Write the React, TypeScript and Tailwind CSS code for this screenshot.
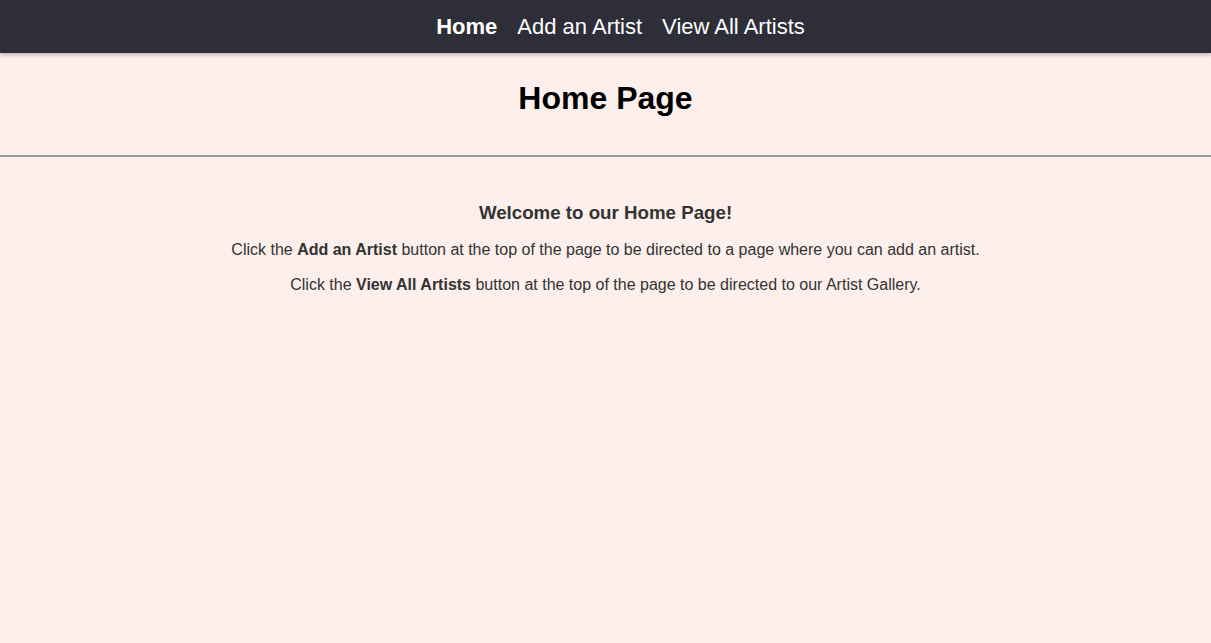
import React from 'react';

const navLinks = [
  { label: 'Home', active: true },
  { label: 'Add an Artist', active: false },
  { label: 'View All Artists', active: false },
];

const App: React.FC = () => {
  return (
    <div
      className="min-h-screen bg-[#fdefeb] text-[#333333]"
      style={{ fontFamily: '"Liberation Sans", Arial, sans-serif' }}
    >
      <nav className="h-[53px] bg-[#2e2e38] shadow-[0_2px_4px_rgba(0,0,0,0.25)] flex items-center justify-center pl-[30px]">
        <ul className="flex items-center gap-[20px]">
          {navLinks.map((link) => (
            <li key={link.label}>
              <a
                href="#"
                className={`text-[22px] text-white ${link.active ? 'font-bold' : 'font-normal'}`}
              >
                {link.label}
              </a>
            </li>
          ))}
        </ul>
      </nav>

      <header className="pt-[27px] pb-[38px] text-center">
        <h1 className="text-[32px] font-bold text-black leading-[37px]">Home Page</h1>
      </header>
      <hr className="border-0 border-t-2 border-[#999999]" />

      <section className="pt-[45px] text-center">
        <h4 className="text-[18.72px] font-bold leading-[22px] mb-[16px]">Welcome to our Home Page!</h4>
        <p className="text-[16px] leading-[19px] mb-[16px]">
          Click the <b>Add an Artist</b> button at the top of the page to be directed to a page where you can add an artist.
        </p>
        <p className="text-[16px] leading-[19px]">
          Click the <b>View All Artists</b> button at the top of the page to be directed to our Artist Gallery.
        </p>
      </section>
    </div>
  );
};

export default App;
